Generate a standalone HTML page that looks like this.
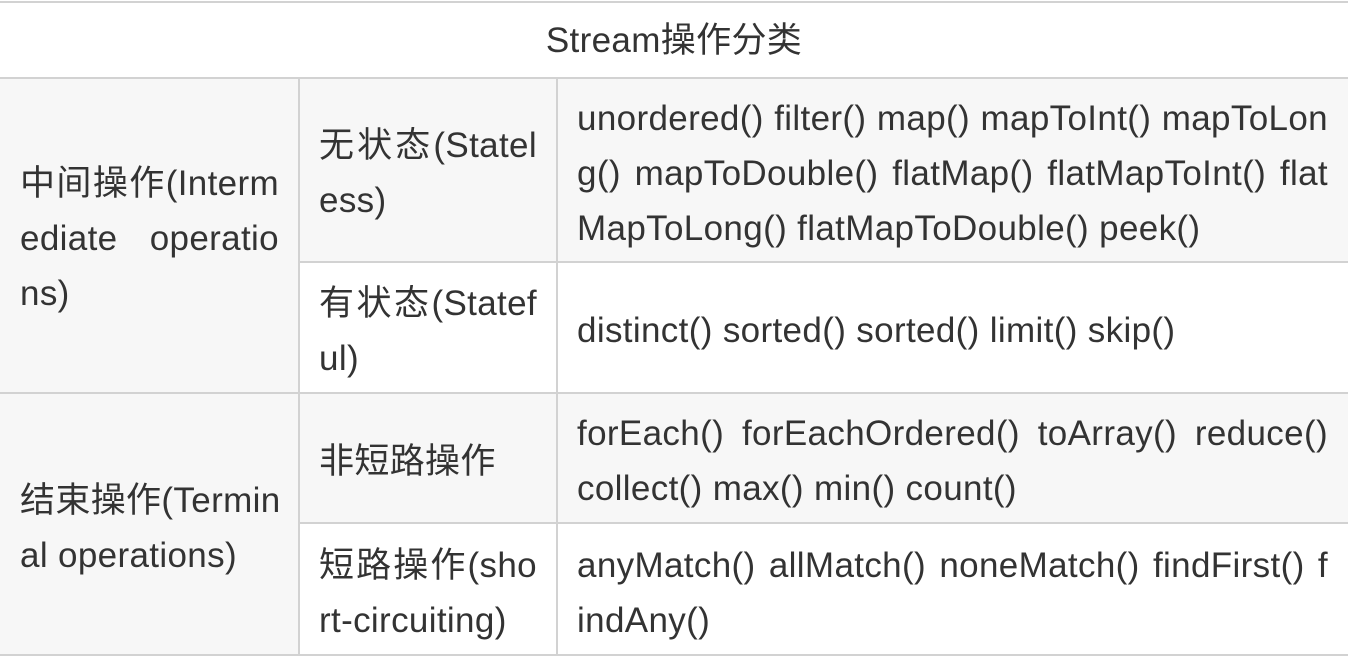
<!DOCTYPE html>
<html><head><meta charset="utf-8"><style>
html,body{margin:0;padding:0;background:#fff;}
body{width:1348px;height:656px;position:relative;overflow:hidden;font-family:"Liberation Sans","Noto Sans CJK SC",sans-serif;font-size:35px;letter-spacing:0.35px;color:#333;}
.c{position:absolute;box-sizing:border-box;display:flex;flex-direction:column;justify-content:center;padding:0 20px;}
.g{background:#f7f7f7;}
.l{line-height:55px;white-space:nowrap;}
.j{text-align:justify;text-align-last:justify;}
.h{position:absolute;background:#d2d2d2;}
</style></head><body>
<div class="c" style="left:0;top:2px;width:1348px;height:76px;align-items:center;"><div class="l">Stream操作分类</div></div>
<div class="c g" style="left:0;top:78px;width:1348px;height:184px;"></div>
<div class="c g" style="left:0;top:78px;width:299px;height:315px;padding-top:6px"><div class="l j">中间操作(Interm</div><div class="l j">ediate operatio</div><div class="l">ns)</div></div>
<div class="c g" style="left:299px;top:78px;width:258px;height:184px;padding-top:6px"><div class="l j">无状态(Statel</div><div class="l">ess)</div></div>
<div class="c g" style="left:557px;top:78px;width:791px;height:184px;padding-top:6px"><div class="l j">unordered() filter() map() mapToInt() mapToLon</div><div class="l j">g() mapToDouble() flatMap() flatMapToInt() flat</div><div class="l">MapToLong() flatMapToDouble() peek()</div></div>
<div class="c" style="left:299px;top:262px;width:258px;height:131px;padding-top:6px"><div class="l j">有状态(Statef</div><div class="l">ul)</div></div>
<div class="c" style="left:557px;top:262px;width:791px;height:131px;padding-top:6px"><div class="l">distinct() sorted() sorted() limit() skip()</div></div>
<div class="c g" style="left:0;top:393px;width:1348px;height:130px;"></div>
<div class="c g" style="left:0;top:393px;width:299px;height:263px;padding-top:6px"><div class="l j">结束操作(Termin</div><div class="l">al operations)</div></div>
<div class="c g" style="left:299px;top:393px;width:258px;height:130px;padding-top:6px"><div class="l">非短路操作</div></div>
<div class="c g" style="left:557px;top:393px;width:791px;height:130px;padding-top:6px"><div class="l j">forEach() forEachOrdered() toArray() reduce()</div><div class="l">collect() max() min() count()</div></div>
<div class="c" style="left:299px;top:523px;width:258px;height:133px;padding-top:6px"><div class="l j">短路操作(sho</div><div class="l">rt-circuiting)</div></div>
<div class="c" style="left:557px;top:523px;width:791px;height:133px;padding-top:6px"><div class="l j">anyMatch() allMatch() noneMatch() findFirst() f</div><div class="l">indAny()</div></div>
<div class="h" style="left:0;top:1px;width:1348px;height:2px"></div>
<div class="h" style="left:0;top:77px;width:1348px;height:2px"></div>
<div class="h" style="left:299px;top:261px;width:1049px;height:2px"></div>
<div class="h" style="left:0;top:392px;width:1348px;height:2px"></div>
<div class="h" style="left:299px;top:522px;width:1049px;height:2px"></div>
<div class="h" style="left:0;top:654px;width:1348px;height:2px"></div>
<div class="h" style="left:298px;top:78px;width:2px;height:578px"></div>
<div class="h" style="left:556px;top:78px;width:2px;height:578px"></div>
</body></html>
